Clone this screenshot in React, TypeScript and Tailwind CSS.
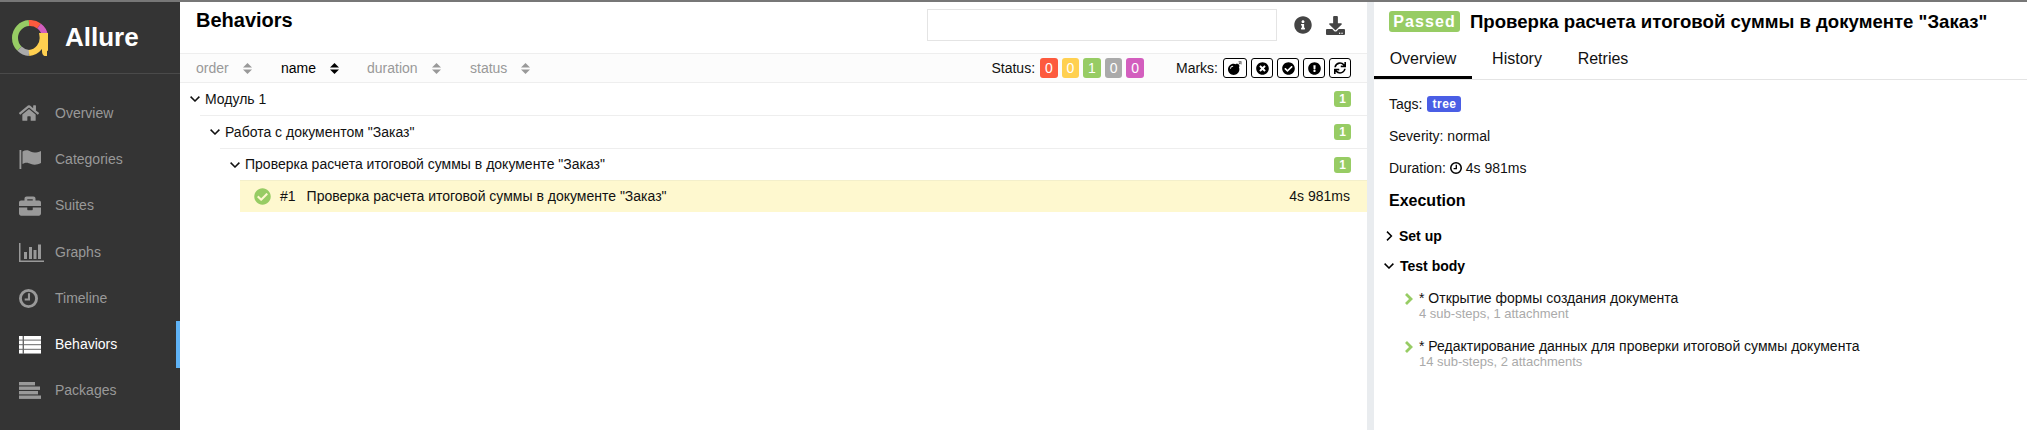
import { FaHome, FaBriefcase, FaInfoCircle, FaDownload, FaBomb, FaTimesCircle, FaCheckCircle, FaExclamationCircle, FaSync } from "react-icons/fa";
import type { ReactNode } from "react";

function FlagIcon() {
  return (
    <svg width="22" height="19" viewBox="0 0 22 19" fill="currentColor">
      <rect x="0.5" y="0" width="1.8" height="19" />
      <path d="M3.5 1.5 C7 -0.5 10 0.5 12 1.8 C15 3.2 18 2.6 22 1 V13 C18 15 15 15 12 14 C9 12.6 7 11.8 3.5 14 Z" />
    </svg>
  );
}

function ChartIcon() {
  return (
    <svg width="25" height="19" viewBox="0 0 25 19" fill="currentColor">
      <rect x="0" y="0" width="1.5" height="19" />
      <rect x="0" y="17.5" width="25" height="1.5" />
      <rect x="5" y="9" width="3" height="7" />
      <rect x="10" y="4" width="3" height="12" />
      <rect x="14.5" y="7" width="3" height="9" />
      <rect x="19" y="1.5" width="3" height="14.5" />
    </svg>
  );
}

function ClockIcon({ size, width }: { size: number; width: number }) {
  return (
    <svg width={size} height={size} viewBox="0 0 20 20" fill="none" stroke="currentColor">
      <circle cx="10" cy="10" r={10 - width / 2} strokeWidth={width} />
      <path d="M10.5 4.5 V11 H6" strokeWidth="2.2" />
    </svg>
  );
}

function ListIcon() {
  return (
    <svg width="22" height="18" viewBox="0 0 22 18" fill="currentColor">
      <rect x="0" y="0" width="22" height="18" opacity="0.25" />
      {[0, 4.6, 9.2, 13.8].map((y) => (
        <g key={y}>
          <rect x="0" y={y} width="3.6" height="3.6" />
          <rect x="5" y={y} width="17" height="3.6" />
        </g>
      ))}
    </svg>
  );
}

function PackagesIcon() {
  return (
    <svg width="22" height="17" viewBox="0 0 22 17" fill="currentColor">
      <rect x="0" y="0" width="16" height="3.4" />
      <rect x="0" y="4.5" width="21" height="3.4" />
      <rect x="0" y="9" width="19" height="3.4" />
      <rect x="0" y="13.5" width="22" height="3.4" />
    </svg>
  );
}

function ChevronDown() {
  return (
    <svg width="10" height="6" viewBox="0 0 10 6" fill="none" stroke="currentColor" strokeWidth="1.5" className="shrink-0">
      <path d="M0.6 0.6 L5 5 L9.4 0.6" />
    </svg>
  );
}

function ChevronRight() {
  return (
    <svg width="10" height="10" viewBox="0 0 10 10" fill="none" stroke="currentColor" strokeWidth="1.5" className="shrink-0">
      <path d="M3 0.6 L7.4 5 L3 9.4" />
    </svg>
  );
}

function StepChevron() {
  return (
    <svg width="8" height="12" viewBox="0 0 8 12" fill="none" stroke="#97cc64" strokeWidth="2.8" className="mt-[3px] shrink-0">
      <path d="M1 1 L6 6 L1 11" />
    </svg>
  );
}

function Logo() {
  return (
    <svg width="36" height="36" viewBox="0 0 36 36" fill="none" strokeWidth="6">
      <path d="M3 18 A15 15 0 0 1 17 3" stroke="#97cc64" />
      <path d="M3 18 A15 15 0 0 0 7.5 28.7" stroke="#97cc64" />
      <path d="M17 3 A15 15 0 0 1 27 6" stroke="#fd5a3e" />
      <path d="M27 6 A15 15 0 0 1 33 16" stroke="#d35ebe" />
      <path d="M7.5 28.7 A15 15 0 0 0 17 33" stroke="#aaaaaa" />
      <path d="M17 33 A15 15 0 0 0 30.5 16 L33 16 L33 31 Q33 33.5 35 33.5" stroke="#ffd050" />
    </svg>
  );
}

const NAV: { label: string; icon: ReactNode; active?: boolean }[] = [
  { label: "Overview", icon: <FaHome size={20} /> },
  { label: "Categories", icon: <FlagIcon /> },
  { label: "Suites", icon: <FaBriefcase size={22} /> },
  { label: "Graphs", icon: <ChartIcon /> },
  { label: "Timeline", icon: <ClockIcon size={19} width={3} /> },
  { label: "Behaviors", icon: <ListIcon />, active: true },
  { label: "Packages", icon: <PackagesIcon /> },
];

function SortArrows({ active }: { active?: boolean }) {
  return (
    <svg width="9" height="11" viewBox="0 0 9 11" className={active ? "text-black" : "text-[#999]"} fill="currentColor">
      <path d="M4.5 0 L9 4.5 H0 Z" />
      <path d="M0 6.5 H9 L4.5 11 Z" />
    </svg>
  );
}

function Sort({ label, active, width }: { label: string; active?: boolean; width: string }) {
  return (
    <div className={`flex items-center gap-[14px] ${width} ${active ? "text-black" : "text-[#999]"}`}>
      <span>{label}</span>
      <SortArrows active={active} />
    </div>
  );
}

function Count({ n, color }: { n: number; color: string }) {
  return (
    <span className={`flex h-5 w-[17.6px] items-center justify-center rounded-[3px] text-white ${color}`}>{n}</span>
  );
}

function Mark({ children, wide }: { children: ReactNode; wide?: boolean }) {
  return (
    <span className={`flex h-5 ${wide ? "w-6" : "w-[22px]"} items-center justify-center rounded-[3px] border border-black bg-white text-black`}>
      {children}
    </span>
  );
}

function Badge() {
  return (
    <span className="flex h-4 w-[17px] items-center justify-center rounded-[3px] bg-[#97cc64] text-[12px] font-bold text-white">1</span>
  );
}

function GroupRow({ label, className }: { label: string; className: string }) {
  return (
    <div className={`flex items-center justify-between pl-[10px] pr-[16px] ${className}`}>
      <div className="flex items-center gap-[5px] text-[#111]">
        <ChevronDown />
        <span>{label}</span>
      </div>
      <Badge />
    </div>
  );
}

function Step({ title, sub }: { title: string; sub: string }) {
  return (
    <div className="flex gap-[6px] pl-[31px]">
      <StepChevron />
      <div>
        <div className="leading-[16px] text-[#111]">{title}</div>
        <div className="text-[13px] leading-[15px] text-[#aaa]">{sub}</div>
      </div>
    </div>
  );
}

export default function App() {
  return (
    <div className="flex h-[430px] w-[2027px] flex-col overflow-hidden bg-white font-['Liberation_Sans',sans-serif] text-[14px]">
      <div className="h-[2px] bg-[#777]" />
      <div className="flex min-h-0 flex-1">
        {/* Side nav */}
        <aside className="flex w-[180px] shrink-0 flex-col bg-[#343434]">
          <div className="flex h-[72px] items-center gap-[17px] border-b border-[#4a4a4a] pl-[12px]">
            <Logo />
            <span className="text-[26px] font-bold text-white">Allure</span>
          </div>
          <nav className="flex flex-col pt-[16px]">
            {NAV.map((item) => (
              <div
                key={item.label}
                className={`flex h-[46.3px] items-center border-r-4 ${item.active ? "border-[#5fb3f6] text-white" : "border-transparent text-[#999]"}`}
              >
                <span className="flex w-[55px] shrink-0 justify-start pl-[19px]">{item.icon}</span>
                <span>{item.label}</span>
              </div>
            ))}
          </nav>
        </aside>

        {/* Tree pane */}
        <main className="flex min-w-0 flex-1 flex-col">
          <div className="flex h-[52px] items-start justify-between border-b border-[#eee] pl-[16px]">
            <h2 className="pt-[5px] text-[20px] font-bold leading-[26px] text-black">Behaviors</h2>
            <div className="flex items-center pt-[7px]">
              <div className="h-8 w-[350px] border border-[#e4e4e4] bg-white" />
              <span className="ml-[17px] text-[#444]"><FaInfoCircle size={18} /></span>
              <span className="ml-[14px] mr-[22px] text-[#444]"><FaDownload size={19} /></span>
            </div>
          </div>
          <div className="flex h-[29px] items-center justify-between border-b border-[#eee] bg-[#fcfcfc] pl-[16px] pr-[16px]">
            <div className="flex items-center">
              <Sort label="order" width="w-[85px]" />
              <Sort label="name" active width="w-[86px]" />
              <Sort label="duration" width="w-[103px]" />
              <Sort label="status" />
            </div>
            <div className="flex items-center">
              <span className="mr-[5px] text-[#111]">Status:</span>
              <div className="flex gap-[4px]">
                <Count n={0} color="bg-[#fd5a3e]" />
                <Count n={0} color="bg-[#ffd050]" />
                <Count n={1} color="bg-[#97cc64]" />
                <Count n={0} color="bg-[#aaaaaa]" />
                <Count n={0} color="bg-[#d35ebe]" />
              </div>
              <span className="ml-[32px] mr-[5px] text-[#111]">Marks:</span>
              <div className="flex gap-[4px]">
                <Mark wide><FaBomb size={14} /></Mark>
                <Mark><FaTimesCircle size={13} /></Mark>
                <Mark><FaCheckCircle size={13} /></Mark>
                <Mark><FaExclamationCircle size={13} /></Mark>
                <Mark><FaSync size={12} /></Mark>
              </div>
            </div>
          </div>
          <GroupRow label="Модуль 1" className="h-[32px]" />
          <GroupRow label={'Работа с документом "Заказ"'} className="ml-[20px] h-[33px] border-t border-[#eee]" />
          <GroupRow label={'Проверка расчета итоговой суммы в документе "Заказ"'} className="ml-[40px] h-[32px] border-t border-[#eee]" />
          <div className="ml-[60px] flex h-[32px] items-center justify-between border-t border-[#f3efcb] bg-[#fef8cf] pr-[17px] text-[#111]">
            <div className="flex items-center pl-[14px]">
              <FaCheckCircle size={17} className="text-[#97cc64]" />
              <span className="ml-[9px]">#1</span>
              <span className="ml-[11px]">Проверка расчета итоговой суммы в документе "Заказ"</span>
            </div>
            <span>4s 981ms</span>
          </div>
        </main>

        {/* Splitter */}
        <div className="w-[7px] shrink-0 bg-[#e9ecef]" />

        {/* Test result pane */}
        <section className="flex w-[653px] shrink-0 flex-col">
          <div className="flex h-[39px] items-center gap-[10px] pl-[15px]">
            <span className="w-[71px] rounded-[3px] bg-[#97cc64] text-center text-[16px] font-bold leading-[21px] tracking-[1.1px] text-white">Passed</span>
            <h2 className="text-[18.6px] font-bold text-black">Проверка расчета итоговой суммы в документе "Заказ"</h2>
          </div>
          <div className="flex h-[39px] border-b border-[#e4e4e4] text-[16px] text-[#111]">
            <div className="flex h-[38px] w-[98px] items-center justify-center border-b-[3px] border-black">Overview</div>
            <div className="flex h-[38px] w-[90px] items-center justify-center border-b-[3px] border-transparent">History</div>
            <div className="flex h-[38px] w-[82px] items-center justify-center border-b-[3px] border-transparent">Retries</div>
          </div>
          <div className="flex flex-col gap-[16px] pl-[15px] pt-[16px] text-[#111]">
            <div className="flex h-[16px] items-center gap-[5px]">
              <span>Tags:</span>
              <span className="rounded-[3px] bg-[#4a5ee5] px-[5px] text-[12px] font-bold leading-[16px] tracking-[0.5px] text-white">tree</span>
            </div>
            <div className="h-[16px] leading-[16px]">Severity: normal</div>
            <div className="flex h-[16px] items-center gap-[4px]">
              <span>Duration:</span>
              <span className="text-black"><ClockIcon size={12} width={2.6} /></span>
              <span>4s 981ms</span>
            </div>
          </div>
          <h3 className="pl-[15px] pt-[15px] text-[16px] font-bold leading-[20px] text-black">Execution</h3>
          <div className="mt-[17px] flex h-[16px] items-center gap-[5px] pl-[10px] text-black">
            <ChevronRight />
            <span className="font-bold leading-[16px]">Set up</span>
          </div>
          <div className="mt-[14px] flex h-[16px] items-center gap-[6px] pl-[10px] text-black">
            <ChevronDown />
            <span className="font-bold leading-[16px]">Test body</span>
          </div>
          <div className="flex flex-col gap-[17px] pt-[16px]">
            <Step title="* Открытие формы создания документа" sub="4 sub-steps, 1 attachment" />
            <Step title="* Редактирование данных для проверки итоговой суммы документа" sub="14 sub-steps, 2 attachments" />
          </div>
        </section>
      </div>
    </div>
  );
}
